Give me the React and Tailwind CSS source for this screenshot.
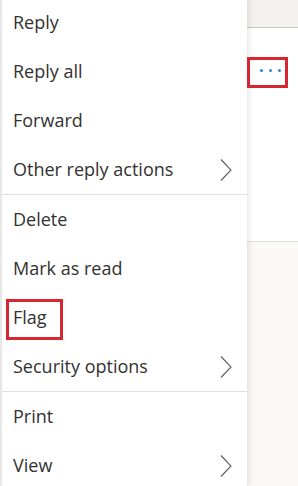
import React from "react";

const GROUPS = [
  [
    { label: "Reply" },
    { label: "Reply all" },
    { label: "Forward" },
    { label: "Other reply actions", sub: true },
  ],
  [
    { label: "Delete" },
    { label: "Mark as read" },
    { label: "Flag" },
    { label: "Security options", sub: true },
  ],
  [{ label: "Print" }, { label: "View", sub: true }],
];

const Chevron = () => (
  <svg width="12" height="22" viewBox="0 0 12 22" fill="none">
    <path d="M1 0.5 L11 11 L1 21.5" stroke="#605e5c" strokeWidth="1.1" />
  </svg>
);

const MenuItem = ({ label, sub }) => (
  <div className="flex h-[49px] items-center justify-between pl-[11px] pr-[15px] text-[18px] text-[#323130]">
    <span>{label}</span>
    {sub && <Chevron />}
  </div>
);

export default function App() {
  return (
    <div
      className="relative flex h-[486px] w-[298px] overflow-hidden bg-[#faf9f8]"
      style={{ fontFamily: '"Open Sans", "Noto Sans", sans-serif' }}
    >
      <div className="w-[2px] shrink-0 bg-[#edebe9]" />

      <div className="relative z-10 -mt-[2px] w-[245px] shrink-0 bg-white shadow-[2px_0_6px_rgba(0,0,0,0.10)]">
        {GROUPS.map((group, gi) => (
          <div key={gi} className={gi > 0 ? "border-t border-[#e1dfdd]" : ""}>
            {group.map((item) => (
              <MenuItem key={item.label} {...item} />
            ))}
          </div>
        ))}
      </div>

      <div className="flex flex-1 flex-col">
        <div className="h-[28px] border-b border-[#c8c6c4] bg-[#f3f2f1]" />
        <div className="flex h-[213px] items-start bg-white pl-[13px] pt-[41px]">
          <div className="flex gap-[6px]">
            <span className="h-[3px] w-[3px] rounded-full bg-[#2b88d8]" />
            <span className="h-[3px] w-[3px] rounded-full bg-[#2b88d8]" />
            <span className="h-[3px] w-[3px] rounded-full bg-[#2b88d8]" />
          </div>
        </div>
        <div className="flex-1 border-t border-[#e1dfdd] bg-[#faf9f8]" />
      </div>

      <div className="absolute left-[247px] top-[57px] z-20 h-[31px] w-[41px] border-[3px] border-[#d7262f]" />
      <div className="absolute left-[6px] top-[299px] z-20 h-[41px] w-[57px] border-[3px] border-[#d7262f]" />
    </div>
  );
}
